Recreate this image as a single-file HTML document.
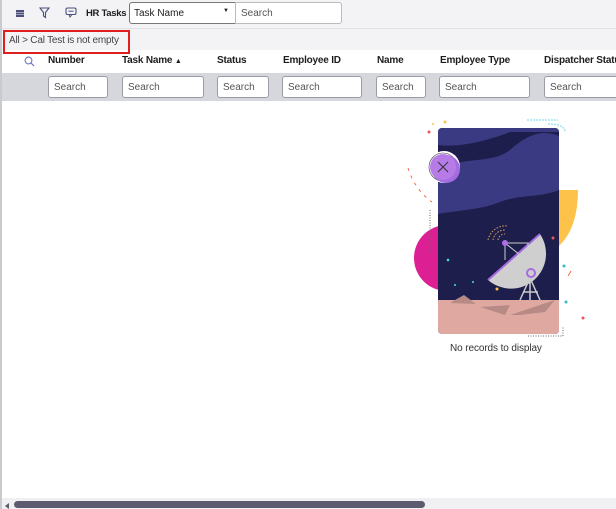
<!DOCTYPE html>
<html><head><style>
*{box-sizing:border-box;margin:0;padding:0}
body{width:616px;height:509px;overflow:hidden;background:#fff;font-family:"Liberation Sans",sans-serif;font-size:10px;color:#1d1d1d;position:relative}
.abs{position:absolute}
.inp{position:absolute;background:#fff;border:1px solid #9a9ca3;border-radius:3px;height:22px;font-size:10px;color:#555;padding:5px 5px}
.h{position:absolute;top:55px;font-weight:bold;font-size:10px;letter-spacing:-0.2px;white-space:nowrap}
</style></head><body>
<div class="abs" style="left:0;top:0;width:2px;height:509px;background:#c9cacf"></div>
<div class="abs" style="left:2px;top:0;width:614px;height:28px;background:#f3f3f5"></div>
<div class="abs" style="left:2px;top:28px;width:614px;height:22px;background:#f3f3f5;border-top:1px solid #e2e2e6"></div>
<div class="abs" style="left:16px;top:10px;width:8px;height:1.5px;background:#4b4f7a;box-shadow:0 2.5px 0 #4b4f7a,0 5px 0 #4b4f7a"></div>
<svg class="abs" style="left:39px;top:7px" width="11" height="12" viewBox="0 0 11 12"><path d="M1 1H10L6.5 5.5V10.5L4.5 9V5.5Z" fill="none" stroke="#4b4f7a" stroke-width="1.1"/></svg>
<svg class="abs" style="left:65px;top:7px" width="12" height="11" viewBox="0 0 12 11"><rect x="1" y="1" width="10" height="6.5" rx="1.5" fill="none" stroke="#4b4f7a" stroke-width="1.1"/><path d="M4 7.5L5 10L7 7.5" fill="none" stroke="#4b4f7a"/><path d="M3.5 4.2H8.5" stroke="#4b4f7a"/></svg>
<div class="abs" style="left:86px;top:8px;font-weight:bold;font-size:9.5px;letter-spacing:-0.3px">HR Tasks</div>
<div class="abs" style="left:129px;top:2px;width:107px;height:22px;background:#fff;border:1px solid #777;border-radius:3px 0 0 3px;padding:5px 4px;font-size:10px">Task Name<span style="position:absolute;right:6px;top:5px;font-size:6px">▼</span></div>
<div class="inp" style="left:235px;top:2px;width:107px;border-radius:0 3px 3px 0;border-color:#bbb">Search</div>
<div class="abs" style="left:3px;top:30px;width:127px;height:24px;border:2px solid #e01e1e"></div>
<div class="abs" style="left:9px;top:35px;font-size:10px;letter-spacing:-0.2px;color:#444">All &gt; Cal Test is not empty</div>
<svg class="abs" style="left:24px;top:56px" width="11" height="11"><circle cx="4.5" cy="4.5" r="3.4" fill="none" stroke="#6a74c9" stroke-width="1.1"/><path d="M7 7L10 10" stroke="#6a74c9" stroke-width="1.2"/></svg>
<div class="h" style="left:48px">Number</div>
<div class="h" style="left:122px">Task Name <span style="font-size:7px">▲</span></div>
<div class="h" style="left:217px">Status</div>
<div class="h" style="left:283px">Employee ID</div>
<div class="h" style="left:377px">Name</div>
<div class="h" style="left:440px">Employee Type</div>
<div class="h" style="left:544px">Dispatcher Status</div>
<div class="abs" style="left:2px;top:73px;width:614px;height:28px;background:#d6d7dc"></div>
<div class="inp" style="left:48px;top:76px;width:60px">Search</div>
<div class="inp" style="left:122px;top:76px;width:82px">Search</div>
<div class="inp" style="left:217px;top:76px;width:52px">Search</div>
<div class="inp" style="left:282px;top:76px;width:80px">Search</div>
<div class="inp" style="left:376px;top:76px;width:50px">Search</div>
<div class="inp" style="left:439px;top:76px;width:91px">Search</div>
<div class="inp" style="left:544px;top:76px;width:80px">Search</div>
<svg class="abs" style="left:400px;top:110px" width="216" height="250" viewBox="0 0 216 250">
<path d="M159 80H178Q178 118 159 136Z" fill="#fdc24a"/>
<circle cx="47" cy="148" r="33" fill="#dc1f93"/>
<rect x="38" y="18" width="121" height="206" rx="4" fill="#1e1e4c"/>
<path d="M42 18H155a4 4 0 0 1 4 4V80C140 88 120 84 100 92C80 100 60 100 38 104V22a4 4 0 0 1 4-4Z" fill="#3a3a82"/>
<path d="M42 22H159V26C145 20 130 22 110 40C90 55 65 45 38 60V35C60 38 90 30 110 22Z" fill="#1e1e4c"/>
<path d="M38 190H159V220a4 4 0 0 1-4 4H42a4 4 0 0 1-4-4Z" fill="#dfa8a0"/>
<path d="M55 190L64 185L76 194L50 193Z M80 197L110 195L105 205Z M110 205L155 190L145 202L120 205Z" fill="#b88a86"/>
<path d="M88 170L140 124A35 35 0 0 1 88 170Z" fill="#cfcfcf"/>
<path d="M88 170L140 124" stroke="#a56be0" stroke-width="2"/>
<circle cx="131" cy="163" r="4" fill="none" stroke="#a56be0" stroke-width="2"/>
<path d="M130 168L120 190M130 168L140 190M130 168V190M123 182H138" stroke="#ccc" stroke-width="1.5"/>
<path d="M105 133H128V150M105 133V150M105 133L120 145" stroke="#ccc" stroke-width="1" fill="none"/>
<circle cx="105" cy="133" r="3" fill="#b06ee6"/>
<path d="M88 130A18 18 0 0 1 108 116M93 130A12 12 0 0 1 106 120M98 130A7 7 0 0 1 105 124" stroke="#d9a55a" stroke-width="1" stroke-dasharray="1.5 1.5" fill="none"/>
<circle cx="44" cy="57" r="16" fill="#fff"/><circle cx="43" cy="57" r="14" fill="#fff" stroke="#333" stroke-width=".6"/>
<circle cx="46" cy="59" r="14" fill="#a56be0"/><circle cx="43" cy="57" r="13" fill="#b77be8"/>
<path d="M38 52L48 62M48 52L38 62" stroke="#333" stroke-width="1"/>
<path d="M8 58Q15 80 32 92" stroke="#f06b4a" stroke-dasharray="3 5" fill="none"/>
<path d="M30 100V145M128 226H163V217" stroke="#666" stroke-dasharray="1 1.5" fill="none"/>
<path d="M127 10H158M148 14Q165 14 165 22" stroke="#8ee0ef" stroke-width="1.2" fill="none" stroke-dasharray="2 1"/>
<circle cx="29" cy="22" r="1.5" fill="#e55"/><circle cx="45" cy="12" r="1.5" fill="#fdc24a"/><circle cx="33" cy="14" r="1" fill="#fdc24a"/>
<circle cx="153" cy="128" r="1.5" fill="#e55"/><circle cx="164" cy="156" r="1.5" fill="#3bc"/><circle cx="166" cy="192" r="1.5" fill="#3bc"/><circle cx="183" cy="208" r="1.5" fill="#e55"/>
<circle cx="48" cy="150" r="1.3" fill="#4dd"/><circle cx="55" cy="175" r="1" fill="#4dd"/><circle cx="73" cy="172" r="1" fill="#4dd"/><circle cx="97" cy="179" r="1.5" fill="#fdc24a"/>
<path d="M171 161L168 166" stroke="#f06b4a" stroke-width="1"/>
</svg>
<div class="abs" style="left:450px;top:343px;font-size:10px;letter-spacing:-0.1px;color:#333">No records to display</div>
<div class="abs" style="left:2px;top:498px;width:614px;height:11px;background:#f0f0f2"></div>
<div class="abs" style="left:5px;top:503px;width:0;height:0;border-top:3px solid transparent;border-bottom:3px solid transparent;border-right:4px solid #5c5b70"></div>
<div class="abs" style="left:14px;top:501px;width:411px;height:7px;border-radius:4px;background:#5c5b70"></div>
</body></html>
